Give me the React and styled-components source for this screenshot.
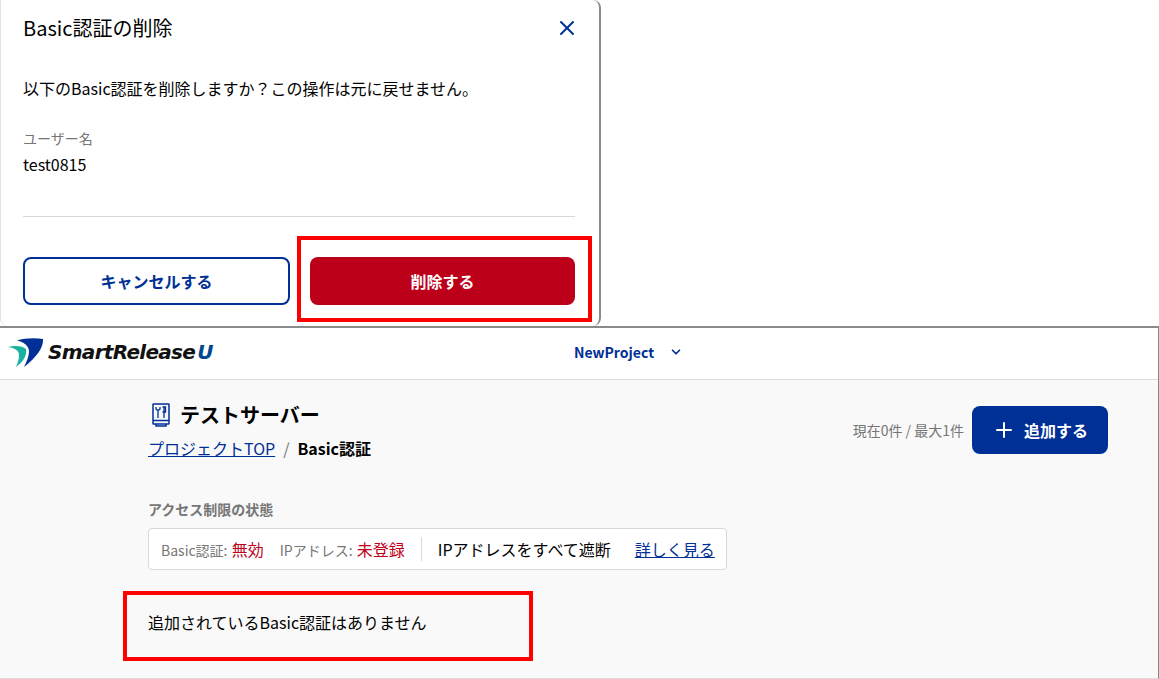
import styled, { createGlobalStyle } from "styled-components"
import { X, Plus, ChevronDown } from "lucide-react"

const GlobalStyle = createGlobalStyle`
    html, body {
        margin: 0;
        padding: 0;
        background: #fff;
        font-family: "Noto Sans CJK JP", "Noto Sans", sans-serif;
        color: #000;
    }
`

const App = () => {
    return (
        <Page>
            <GlobalStyle />
            <TopRow>
                <Modal>
                    <ModalHead>
                        <ModalTitle>Basic認証の削除</ModalTitle>
                        <CloseIcon size={24} strokeWidth={2} />
                    </ModalHead>
                    <ModalText>以下のBasic認証を削除しますか？この操作は元に戻せません。</ModalText>
                    <FieldLabel>ユーザー名</FieldLabel>
                    <FieldValue>test0815</FieldValue>
                    <ModalRule />
                    <ModalActions>
                        <CancelButton>キャンセルする</CancelButton>
                        <DeleteButton>削除する</DeleteButton>
                    </ModalActions>
                    <DeleteHighlight />
                </Modal>
            </TopRow>
            <Frame>
                <Header>
                    <Logo>
                        <svg width="36" height="29" viewBox="0 0 36 29">
                            <path d="M9 2.5 C16 0 27 -0.5 35 1 C35.5 9 30 18 16 29 C20 21 22.5 14 20 9.5 C18 6 14 3.5 9 2.5Z" fill="#002f96" />
                            <path d="M0 9 C7 7 15 8 18 11 C19.5 17 15 24 8 29 C11 22 12 17 10 13.5 C8 11 4 9.5 0 9Z" fill="#19b3a0" />
                        </svg>
                        <LogoText>Smart<span>Release</span><LogoAccent>U</LogoAccent></LogoText>
                    </Logo>
                    <ProjectSelect>
                        NewProject
                        <ChevronDown size={14} strokeWidth={3} />
                    </ProjectSelect>
                </Header>
                <Content>
                    <TitleRow>
                        <div>
                            <ServerTitle>
                                <svg width="18" height="24" viewBox="0 0 18 24" fill="none" stroke="#002f96" strokeWidth="1.5">
                                    <rect x="1" y="1" width="16" height="20" rx="0.5" />
                                    <path d="M1 17.5 H17 M4 21 V23 H14 V21" />
                                    <path d="M6 7.5 V15 M4 4 V6 Q6 8.5 8 6 V4 M12 4 V15 M10.5 4 H13.5 V9 H10.5" strokeWidth="1.3" />
                                </svg>
                                テストサーバー
                            </ServerTitle>
                            <Breadcrumb>
                                <CrumbLink href="#">プロジェクトTOP</CrumbLink>
                                <CrumbSep>/</CrumbSep>
                                <CrumbCurrent>Basic認証</CrumbCurrent>
                            </Breadcrumb>
                        </div>
                        <AddArea>
                            <AddCount>現在0件 / 最大1件</AddCount>
                            <AddButton>
                                <Plus size={24} strokeWidth={2} />
                                追加する
                            </AddButton>
                        </AddArea>
                    </TitleRow>
                    <SectionLabel>アクセス制限の状態</SectionLabel>
                    <StatusBox>
                        <StatusItem>Basic認証: <StatusValue>無効</StatusValue></StatusItem>
                        <StatusItem>IPアドレス: <StatusValue>未登録</StatusValue></StatusItem>
                        <StatusDivider />
                        <StatusPlain>IPアドレスをすべて遮断</StatusPlain>
                        <DetailLink href="#">詳しく見る</DetailLink>
                    </StatusBox>
                    <EmptyText>
                        追加されているBasic認証はありません
                        <EmptyHighlight />
                    </EmptyText>
                </Content>
            </Frame>
        </Page>
    )
}

export default App

const Page = styled.div`
    width: 1159px;
    height: 679px;
    overflow: hidden;
    background: #fff;
`

const TopRow = styled.div`
    height: 326px;
    display: flex;
`

const Modal = styled.div`
    position: relative;
    box-sizing: border-box;
    width: 601px;
    height: 326px;
    padding: 0 24px 0 23px;
    background: #fff;
    border-right: 2px solid #8a8a8a;
    border-left: 1px solid #e2e2e2;
    border-radius: 0 8px 8px 8px;
`

const ModalHead = styled.div`
    height: 56px;
    margin-left: -1px;
    display: flex;
    align-items: center;
    justify-content: space-between;
`

const ModalTitle = styled.h2`
    margin: 0;
    font-size: 20px;
    font-weight: 400;
    line-height: 28px;
`

const CloseIcon = styled(X)`
    color: #002f96;
    margin-right: -4px;
`

const ModalText = styled.p`
    margin: 20px 0 0 -1px;
    font-size: 16px;
    line-height: 24px;
`

const FieldLabel = styled.div`
    margin: 28px 0 0 -1px;
    font-size: 14px;
    line-height: 20px;
    color: #767676;
`

const FieldValue = styled.div`
    margin: 4px 0 0 -1px;
    font-size: 16px;
    line-height: 24px;
`

const ModalRule = styled.hr`
    margin: 40px 0 0 -1px;
    border: 0;
    border-top: 1px solid #d9d9d9;
`

const ModalActions = styled.div`
    margin: 40px 0 0 -1px;
    display: grid;
    grid-template-columns: 267px 265px;
    justify-content: space-between;
`

const BaseButton = styled.button`
    height: 48px;
    border-radius: 8px;
    font-family: inherit;
    font-size: 16px;
    font-weight: 700;
    padding: 0;
`

const CancelButton = styled(BaseButton)`
    background: #fff;
    border: 2px solid #002f96;
    color: #002f96;
`

const DeleteButton = styled(BaseButton)`
    background: #bd001a;
    border: 0;
    color: #fff;
`

const DeleteHighlight = styled.div`
    position: absolute;
    left: 296px;
    top: 236px;
    width: 295px;
    height: 86px;
    box-sizing: border-box;
    border: 4px solid #f00;
`

const Frame = styled.div`
    box-sizing: border-box;
    height: 353px;
    border-top: 2px solid #8a8a8a;
    border-right: 1px solid #8a8a8a;
    border-bottom: 1px solid #ddd;
    background: #f9f9f9;
`

const Header = styled.header`
    position: relative;
    box-sizing: border-box;
    height: 52px;
    background: #fff;
    border-bottom: 1px solid #ddd;
    display: flex;
    align-items: center;
    justify-content: center;
`

const Logo = styled.div`
    position: absolute;
    left: 8px;
    top: 10px;
    display: flex;
    align-items: center;
    gap: 4px;
`

const LogoText = styled.div`
    font-family: "DejaVu Sans", sans-serif;
    font-size: 20px;
    font-weight: 700;
    font-style: italic;
    letter-spacing: -0.7px;
    color: #111;
    line-height: 29px;
`

const LogoAccent = styled.span`
    color: #00498f;
    margin-left: 2px;
`

const ProjectSelect = styled.div`
    display: flex;
    align-items: center;
    gap: 15px;
    margin-left: 99px;
    padding-bottom: 4px;
    font-size: 14px;
    font-weight: 700;
    color: #002f96;
`

const Content = styled.main`
    padding: 19px 50px 0 148px;
`

const TitleRow = styled.div`
    display: flex;
    justify-content: space-between;
    align-items: flex-start;
`

const ServerTitle = styled.h1`
    margin: 0;
    display: flex;
    align-items: center;
    gap: 10px;
    padding-left: 4px;
    font-size: 20px;
    line-height: 32px;
    font-weight: 700;
`

const Breadcrumb = styled.div`
    margin-top: 5px;
    display: flex;
    align-items: center;
    font-size: 16px;
    line-height: 24px;
`

const CrumbLink = styled.a`
    color: #002f96;
`

const CrumbSep = styled.span`
    margin: 0 8px;
    color: #767676;
`

const CrumbCurrent = styled.span`
    font-weight: 700;
`

const AddArea = styled.div`
    display: flex;
    align-items: center;
    gap: 8px;
    margin-top: 7px;
`

const AddCount = styled.span`
    font-size: 14px;
    color: #767676;
`

const AddButton = styled.button`
    width: 136px;
    height: 48px;
    display: flex;
    align-items: center;
    justify-content: center;
    gap: 8px;
    border: 0;
    border-radius: 8px;
    background: #002f96;
    color: #fff;
    font-family: inherit;
    font-size: 16px;
    font-weight: 700;
`

const SectionLabel = styled.div`
    margin-top: 39px;
    font-size: 14px;
    line-height: 20px;
    font-weight: 700;
    color: #767676;
`

const StatusBox = styled.div`
    margin-top: 9px;
    box-sizing: border-box;
    width: 579px;
    height: 42px;
    display: flex;
    align-items: center;
    padding: 0 12px;
    background: #fff;
    border: 1px solid #d9d9d9;
    border-radius: 4px;
`

const StatusItem = styled.span`
    margin-right: 16px;
    font-size: 14px;
    color: #767676;
    white-space: nowrap;
`

const StatusValue = styled.span`
    margin-left: 1px;
    font-size: 16px;
    color: #bd001a;
`

const StatusDivider = styled.span`
    flex: none;
    width: 1px;
    height: 24px;
    background: #d9d9d9;
`

const StatusPlain = styled.span`
    margin-left: 16px;
    font-size: 16px;
    white-space: nowrap;
`

const DetailLink = styled.a`
    margin-left: 24px;
    font-size: 16px;
    color: #002f96;
    white-space: nowrap;
`

const EmptyText = styled.p`
    position: relative;
    margin: 40px 0 0;
    font-size: 16px;
    line-height: 24px;
`

const EmptyHighlight = styled.span`
    position: absolute;
    left: -25px;
    top: -19px;
    width: 410px;
    height: 70px;
    box-sizing: border-box;
    border: 4px solid #f00;
`
